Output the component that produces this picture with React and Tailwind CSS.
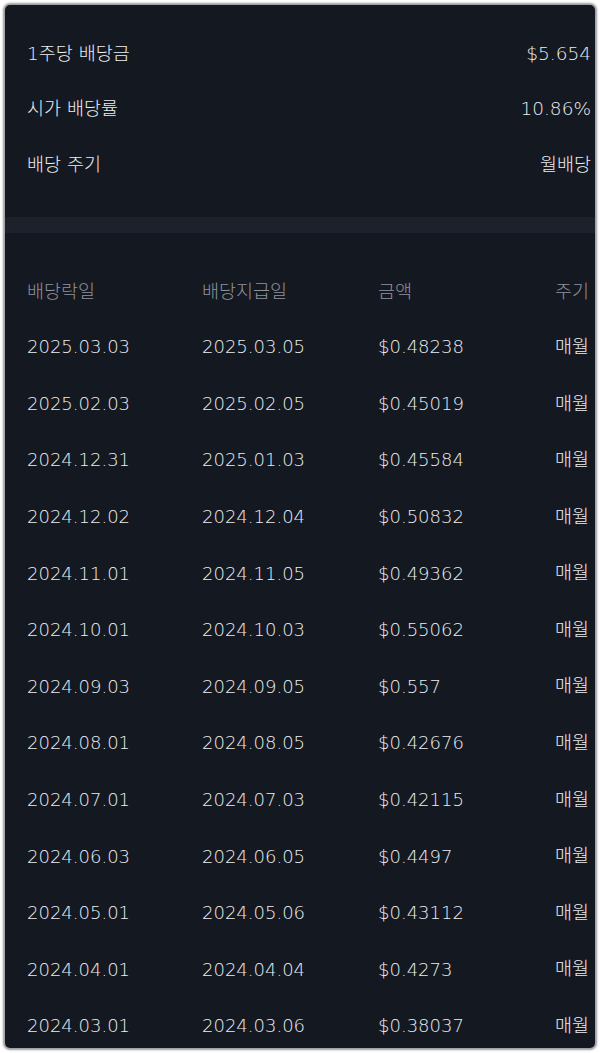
const summary = [
  { label: '1주당 배당금', value: '$5.654' },
  { label: '시가 배당률', value: '10.86%' },
  { label: '배당 주기', value: '월배당' },
];

const history = [
  ['2025.03.03', '2025.03.05', '$0.48238'],
  ['2025.02.03', '2025.02.05', '$0.45019'],
  ['2024.12.31', '2025.01.03', '$0.45584'],
  ['2024.12.02', '2024.12.04', '$0.50832'],
  ['2024.11.01', '2024.11.05', '$0.49362'],
  ['2024.10.01', '2024.10.03', '$0.55062'],
  ['2024.09.03', '2024.09.05', '$0.557'],
  ['2024.08.01', '2024.08.05', '$0.42676'],
  ['2024.07.01', '2024.07.03', '$0.42115'],
  ['2024.06.03', '2024.06.05', '$0.4497'],
  ['2024.05.01', '2024.05.06', '$0.43112'],
  ['2024.04.01', '2024.04.04', '$0.4273'],
  ['2024.03.01', '2024.03.06', '$0.38037'],
];

function App() {
  return (
    <div
      className="h-[1053px] bg-white p-[5px] font-light"
      style={{ fontFamily: '"DejaVu Sans", "Noto Sans CJK KR", sans-serif' }}
    >
      <div className="h-full overflow-hidden rounded-[5px] bg-[#141821] shadow-[0_0_2px_2px_rgba(90,90,90,0.6)]">
        <div className="pt-[21px] pb-[24.5px] pl-[22px] pr-[4px]">
          {summary.map((row) => (
            <div
              key={row.label}
              className="flex h-[55.5px] items-center justify-between text-[18.5px] text-[#eceef1]"
            >
              <span>{row.label}</span>
              <span>{row.value}</span>
            </div>
          ))}
        </div>

        <div className="h-[16px] bg-[#1d212b]" />

        <div className="pt-[31.5px] pl-[22px]">
          <div className="grid h-[54px] grid-cols-[175px_176px_177px_1fr] items-center text-[18.5px] text-[#8e939c]">
            <span>배당락일</span>
            <span>배당지급일</span>
            <span>금액</span>
            <span>주기</span>
          </div>
          {history.map((row) => (
            <div
              key={row[0]}
              className="grid h-[56.6px] grid-cols-[175px_176px_177px_1fr] items-center text-[18px] text-[#eceef1]"
            >
              <span>{row[0]}</span>
              <span>{row[1]}</span>
              <span>{row[2]}</span>
              <span className="text-[18.5px]">매월</span>
            </div>
          ))}
        </div>
      </div>
    </div>
  );
}

export default App;
